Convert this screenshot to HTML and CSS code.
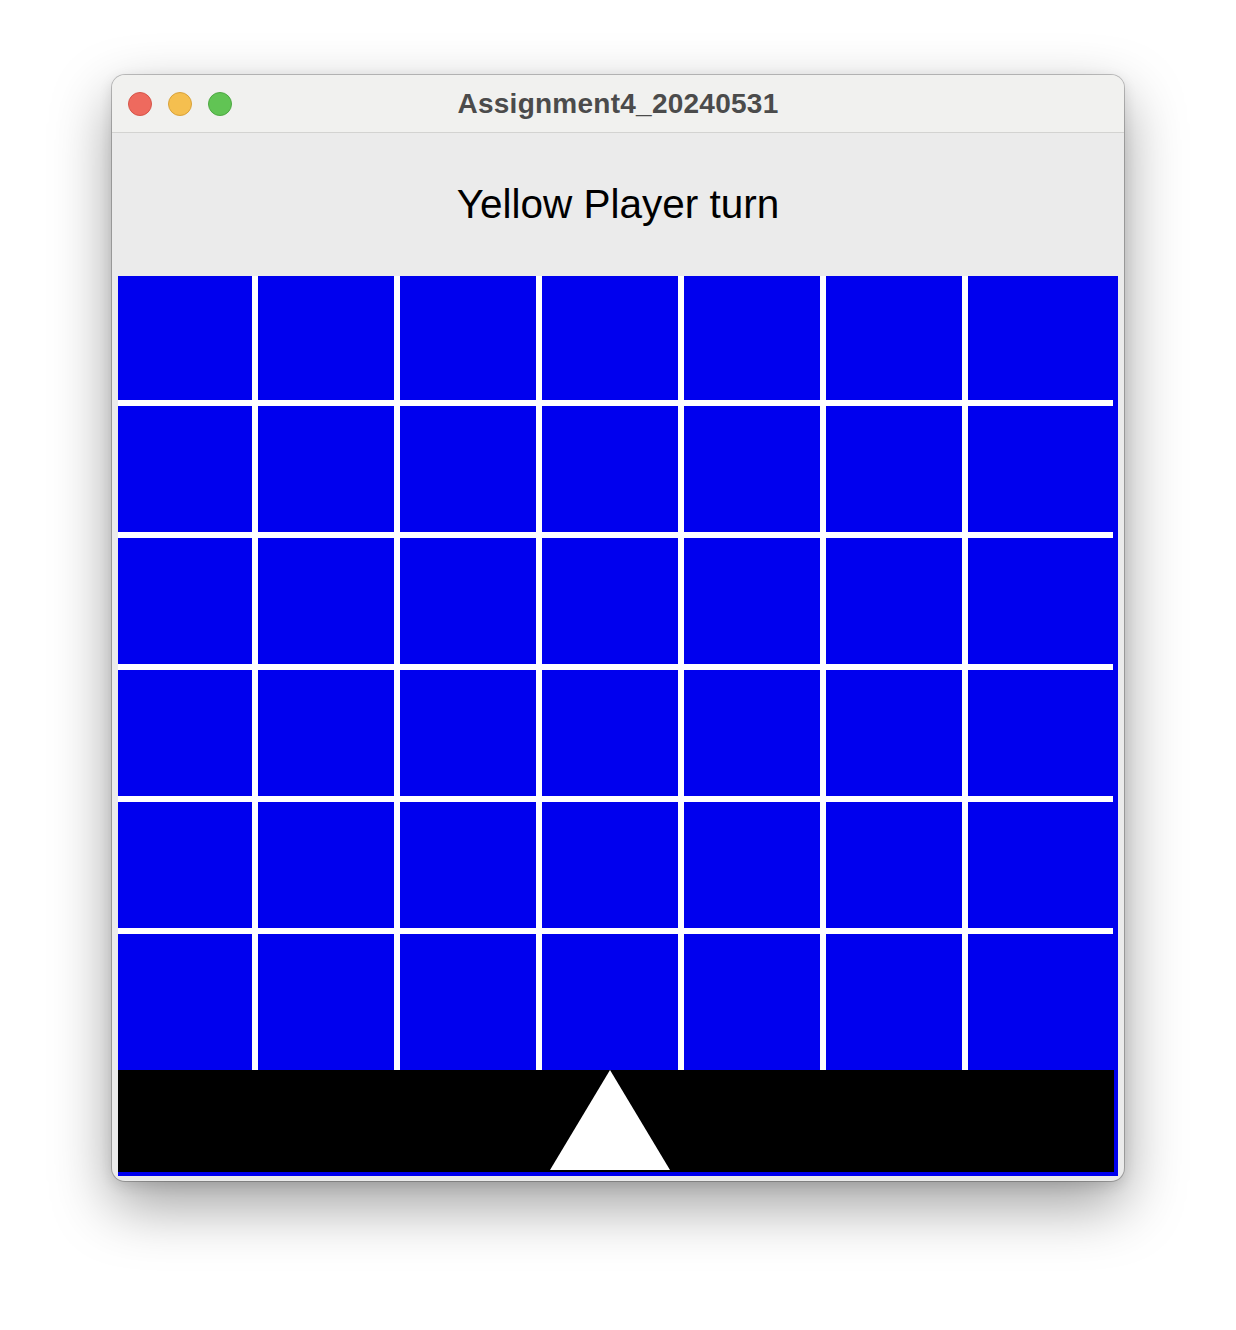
FILE: index.html
```html
<!DOCTYPE html>
<html>
<head>
<meta charset="utf-8">
<link rel="stylesheet" href="styles.css">
</head>
<body>
<div class="window">
  <div class="titlebar">
    <div class="lights">
      <span class="light red"></span>
      <span class="light yellow"></span>
      <span class="light green"></span>
    </div>
    <div class="title">Assignment4_20240531</div>
  </div>
  <div class="content">
    <div class="status">Yellow Player turn</div>
    <div class="board">
      <div class="grid">
        <div class="cell"></div><div class="cell"></div><div class="cell"></div><div class="cell"></div><div class="cell"></div><div class="cell"></div><div class="cell"></div>
        <div class="cell"></div><div class="cell"></div><div class="cell"></div><div class="cell"></div><div class="cell"></div><div class="cell"></div><div class="cell"></div>
        <div class="cell"></div><div class="cell"></div><div class="cell"></div><div class="cell"></div><div class="cell"></div><div class="cell"></div><div class="cell"></div>
        <div class="cell"></div><div class="cell"></div><div class="cell"></div><div class="cell"></div><div class="cell"></div><div class="cell"></div><div class="cell"></div>
        <div class="cell"></div><div class="cell"></div><div class="cell"></div><div class="cell"></div><div class="cell"></div><div class="cell"></div><div class="cell"></div>
        <div class="cell"></div><div class="cell"></div><div class="cell"></div><div class="cell"></div><div class="cell"></div><div class="cell"></div><div class="cell"></div>
      </div>
      <div class="selector">
        <svg class="pointer" width="120" height="100" viewBox="0 0 120 100"><polygon points="60,0 120,100 0,100" fill="#ffffff"/></svg>
      </div>
    </div>
  </div>
</div>
</body>
</html>
```
FILE: styles.css
```css
html, body {
  margin: 0;
  padding: 0;
  background: #ffffff;
}
body {
  padding-top: 75px;
  height: 1255px;
  font-family: "Liberation Sans", Arial, sans-serif;
}
.window {
  width: 1012px;
  margin: 0 auto;
  border-radius: 13px;
  overflow: hidden;
  background: #ebebeb;
  box-shadow: 0 0 0 1px rgba(0,0,0,0.22), 0 24px 60px rgba(0,0,0,0.38), 0 4px 14px rgba(0,0,0,0.12);
}
.titlebar {
  height: 57px;
  border-bottom: 1px solid #d3d3d1;
  background: #f1f1ef;
  display: flex;
  align-items: center;
  position: relative;
}
.lights {
  display: flex;
  gap: 16px;
  padding-left: 16px;
}
.light {
  width: 22px;
  height: 22px;
  border-radius: 50%;
  display: block;
}
.red { background: #ee6a5e; border: 1px solid #d65549; }
.yellow { background: #f5bf4f; border: 1px solid #d9a23a; }
.green { background: #61c454; border: 1px solid #4ea843; }
.title {
  position: absolute;
  left: 0;
  right: 0;
  top: 0;
  bottom: 0;
  display: flex;
  align-items: center;
  justify-content: center;
  font-weight: bold;
  font-size: 28px;
  letter-spacing: 0.25px;
  color: #4b4b4b;
}
.content {
  padding: 0 6px 5px 6px;
}
.status {
  height: 143px;
  display: flex;
  align-items: center;
  justify-content: center;
  font-size: 40.5px;
  color: #000000;
  box-sizing: border-box;
}
.board {
  width: 1000px;
  background: #0000ee;
  padding-bottom: 4px;
}
.grid {
  width: 995px;
  display: grid;
  grid-template-columns: 134px 136px 136px 136px 136px 136px 145px;
  grid-template-rows: 124px 126px 126px 126px 126px 136px;
  gap: 6px;
  background: #ffffff;
}
.cell {
  background: #0000ee;
}
.selector {
  width: 996px;
  height: 102px;
  background: #000000;
  padding-left: 432px;
  box-sizing: border-box;
}
.pointer {
  display: block;
}
```
